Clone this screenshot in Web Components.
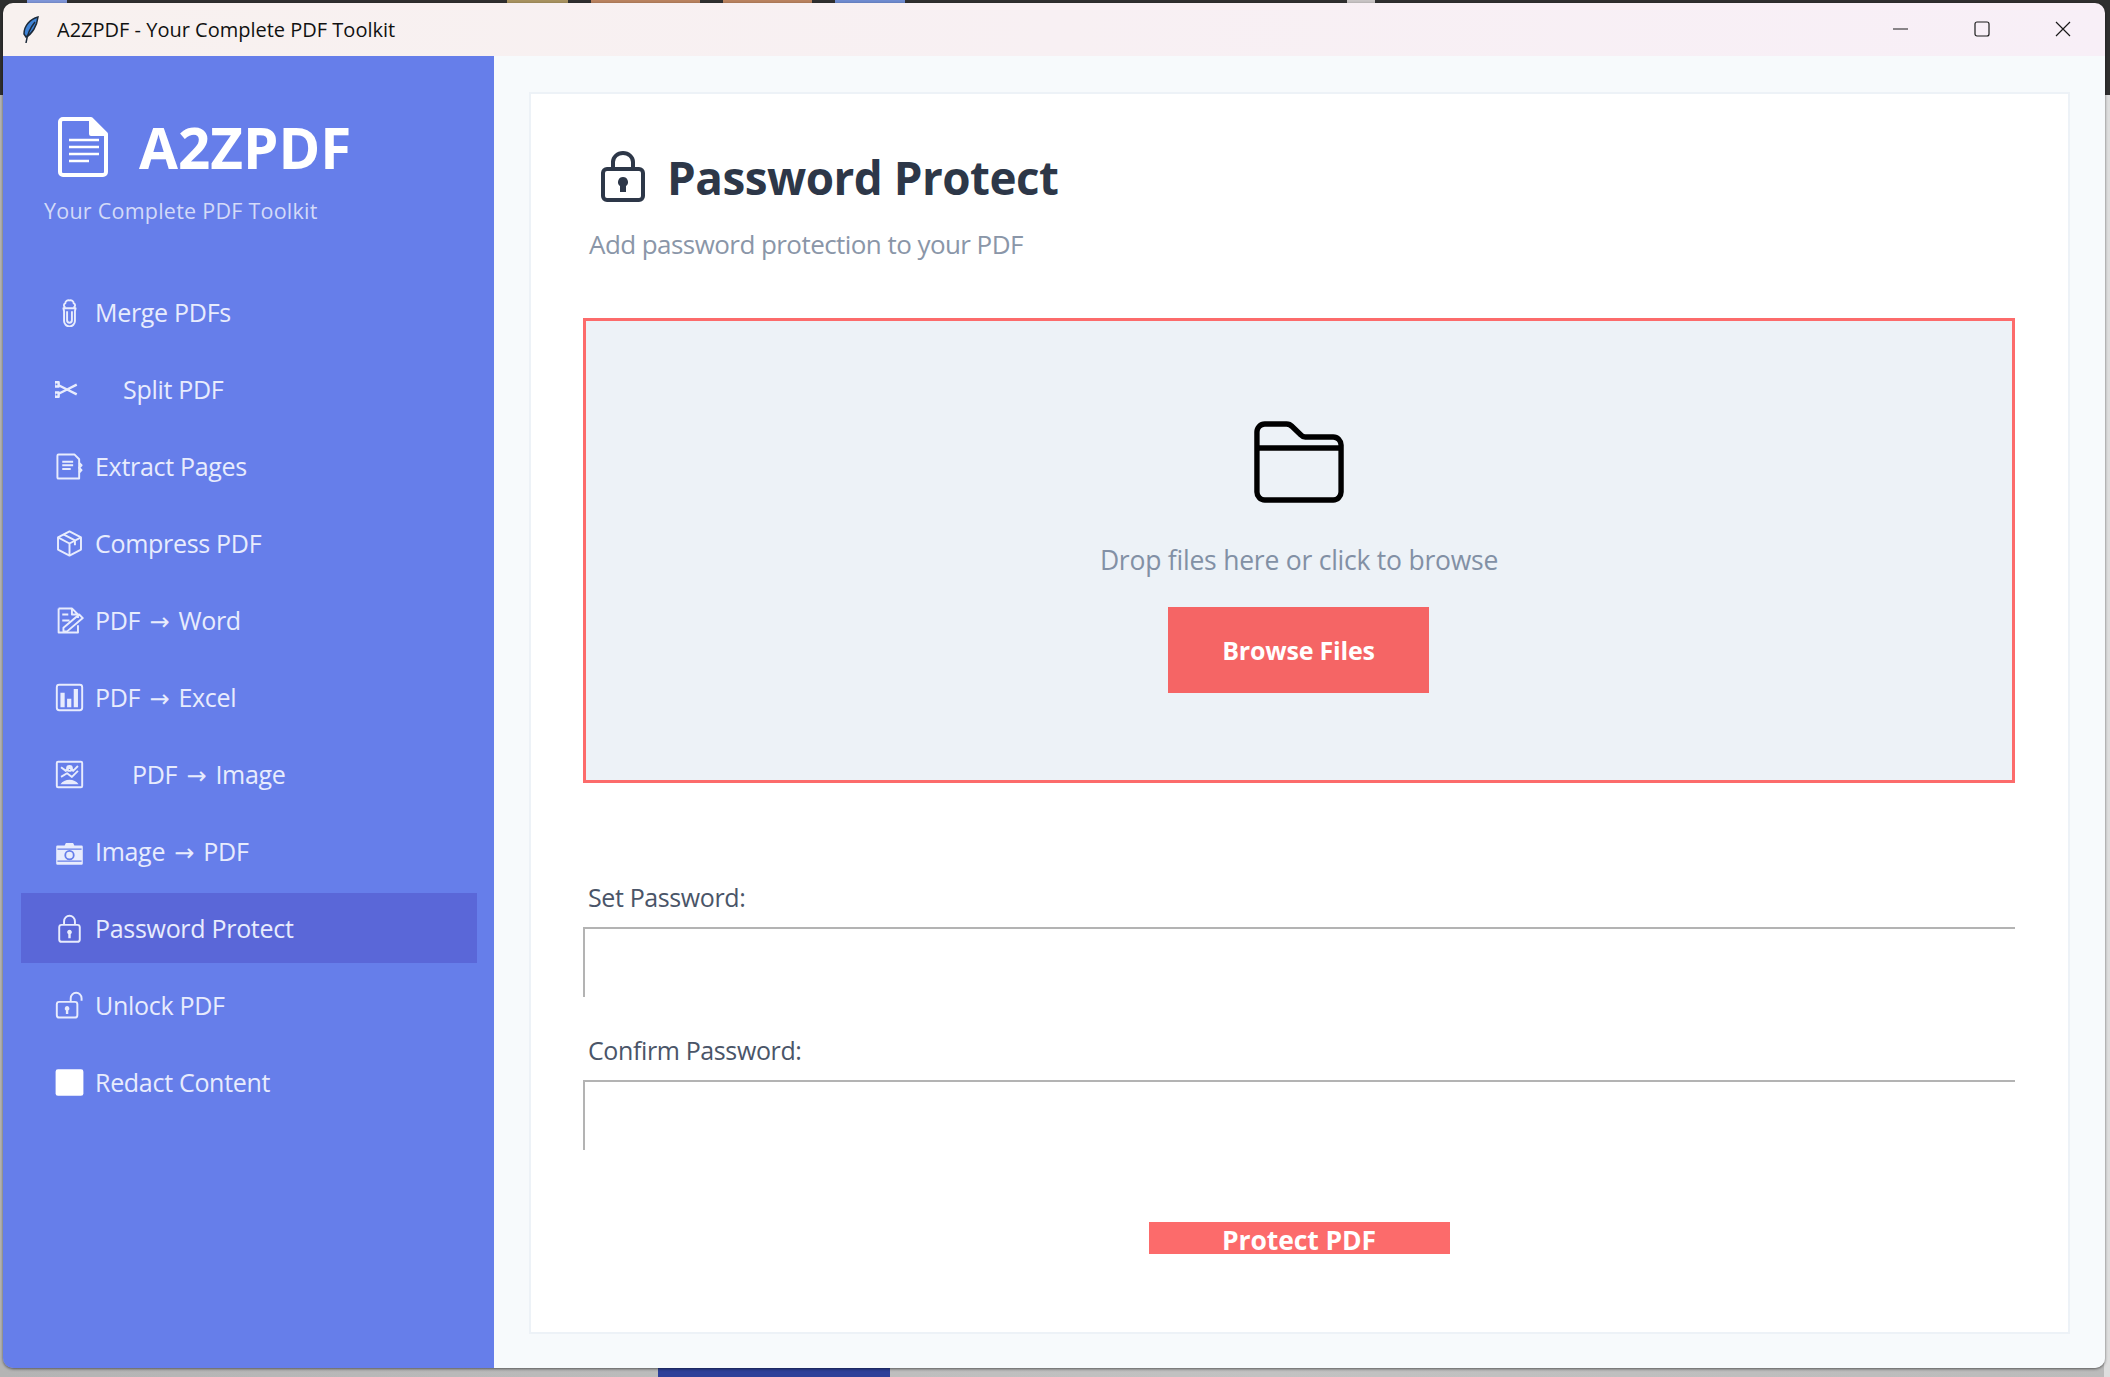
<!DOCTYPE html>
<html lang="en">
<head>
<meta charset="utf-8">
<title>A2ZPDF</title>
<style>
  html, body { margin: 0; height: 100%; overflow: hidden; }
  body { font-family: "Open Sans", "Liberation Sans", sans-serif; }
</style>
</head>
<body>
<desktop-backdrop>
  <app-window>
    <app-sidebar slot="side">
      <nav-item icon="merge">Merge PDFs</nav-item>
      <nav-item icon="split" wide="28">Split PDF</nav-item>
      <nav-item icon="extract">Extract Pages</nav-item>
      <nav-item icon="compress">Compress PDF</nav-item>
      <nav-item icon="word">PDF <span>→</span> Word</nav-item>
      <nav-item icon="excel">PDF <span>→</span> Excel</nav-item>
      <nav-item icon="image" wide="37">PDF <span>→</span> Image</nav-item>
      <nav-item icon="camera">Image <span>→</span> PDF</nav-item>
      <nav-item icon="lock" active>Password Protect</nav-item>
      <nav-item icon="unlock">Unlock PDF</nav-item>
      <nav-item icon="redact">Redact Content</nav-item>
    </app-sidebar>
    <protect-page slot="main"></protect-page>
  </app-window>
</desktop-backdrop>

<script>
/*
 * Icon paths, all drawn on a 24x24 box.
 */
const ICONS = {
  merge: '<path d="M8.500 8c-1.500-1-1.500-3 0-3.500 0-2 2-3 3.500-2.500 1.500-.5 3.500.5 3.500 2.500 1.500.5 1.500 2.500 0 3.500M7 8.500h10l-.5 2.500v8a4.500 4.500 0 0 1-9 0v-8z"/><path d="M10 11v7.500a2 2 0 0 0 4 0V11"/>',
  split: '<g transform="translate(-2.500 0)" stroke-width="2"><rect x="2" y="6" width="3.500" height="3.500"/><rect x="2" y="14.500" width="3.500" height="3.500"/><path d="M5.500 8.500l7 3.500 8-4M5.500 15.500l7-3.500 8 4"/></g>',
  extract: '<path d="M3 2h13l4 4v16H3a1 1 0 0 1-1-1V3a1 1 0 0 1 1-1z"/><path d="M6 8h9M6 11h9M6 14h7M20 9l2 2-2 2 2 2-2 2"/>',
  compress: '<path d="M12 2l9.500 5v10L12 22l-9.500-5V7z"/><path d="M2.500 7L12 12l9.500-5M12 12v10M7 4.500l9.500 5v4"/>',
  word: '<path d="M3 2h11l5 5v3M14 2v5h5M19 16v6H3V2"/><path d="M7 18l13-11 3 3-13 11H7zM6 12h6M6 7h5"/>',
  excel: '<rect x="1.500" y="1.500" width="21" height="21" rx="2"/><path fill="currentColor" stroke="none" d="M4.500 8h3.500v12H4.500zM10 13h3.500v7H10zM15.500 5H19v15h-3.500z"/>',
  image: '<rect x="1.500" y="1.500" width="21" height="21" rx="1"/><path d="M5 6l4 3 3-3 3 3 4-4M5 14l5-3 4 3 5-5"/><circle cx="12" cy="7" r="2"/><path fill="currentColor" stroke="none" d="M4.500 20c3-5 12-5 15 0z"/>',
  camera: '<path fill="currentColor" stroke="none" d="M2 7h6l1-2h6l1 2h6a1 1 0 0 1 1 1v14a1 1 0 0 1-1 1H2a1 1 0 0 1-1-1V8a1 1 0 0 1 1-1z"/><circle cx="12" cy="15" r="3.500" stroke="#667eea" stroke-width="1.500"/><path d="M2 10h20M2 20h20" stroke="#667eea" stroke-width="1"/>',
  lock: '<rect x="3.500" y="9" width="17" height="14" rx="2"/><path d="M7.500 9V6a4.500 4.500 0 0 1 9 0v3"/><path fill="currentColor" stroke="none" d="M12 13a2 2 0 0 1 1 3.700V20h-2v-3.300A2 2 0 0 1 12 13z"/>',
  unlock: '<rect x="1.500" y="9" width="17" height="13" rx="2"/><path d="M13 9V6a4.500 4.500 0 0 1 9 0v2"/><path fill="currentColor" stroke="none" d="M10 12.500a2 2 0 0 1 1 3.700V19H9v-2.800a2 2 0 0 1 1-3.700z"/>',
  redact: '<rect x="0.500" y="1" width="23" height="22" rx="2" fill="#fff" stroke="none"/>'
}

/*
 * Backdrop: the desktop seen around the edges of the window.
 */
const backdropTemplate = document.createElement('template')
backdropTemplate.innerHTML = `
  <style>
    :host {
      display: block;
      position: relative;
      width: 2110px;
      height: 1377px;
      overflow: hidden;
      background: linear-gradient(90deg, #b4b4b4, #c2c2c2 60%, #bbb);
    }
    .top { position: absolute; left: 0; right: 0; top: 0; height: 95px; background: #2f2f2f; }
    .right { position: absolute; right: 0; top: 95px; width: 6px; height: 1290px; background: #dedede; }
    .tab { position: absolute; top: 0; height: 3px; }
    .strip { position: absolute; left: 658px; bottom: 0; width: 232px; height: 9px; background: #2e4099; }
    ::slotted(app-window) { position: absolute; left: 3px; top: 3px; }
  </style>
  <div class="top"></div>
  <div class="right"></div>
  <div class="tab" style="left:27px;width:40px;background:#7f95d8"></div>
  <div class="tab" style="left:507px;width:61px;background:#a8925f"></div>
  <div class="tab" style="left:591px;width:109px;background:#b9825f"></div>
  <div class="tab" style="left:723px;width:89px;background:#b9825f"></div>
  <div class="tab" style="left:835px;width:70px;background:#6f8bd0"></div>
  <div class="tab" style="left:1347px;width:28px;background:#c8c4c4"></div>
  <div class="strip"></div>
  <slot></slot>
`
customElements.define('desktop-backdrop', class extends HTMLElement {
  constructor () {
    super()
    this.attachShadow({ mode: 'open' }).appendChild(backdropTemplate.content.cloneNode(true))
  }
})

/*
 * The window: title bar above, sidebar and main area below.
 */
const windowTemplate = document.createElement('template')
windowTemplate.innerHTML = `
  <style>
    :host {
      display: flex;
      flex-direction: column;
      width: 2102px;
      height: 1365px;
      border-radius: 10px;
      overflow: hidden;
      box-shadow: 0 1px 3px rgba(0, 0, 0, .55);
    }
    .bar {
      display: flex;
      align-items: center;
      flex: 0 0 53px;
      padding: 0 2px 0 17px;
      background: linear-gradient(90deg, #f8f1ef, #f8eff7);
      color: #111;
      font: 20px "Open Sans", sans-serif;
    }
    .bar svg.feather { width: 22px; height: 30px; margin-right: 15px; }
    .title { flex: 1; }
    .ctl { width: 81px; height: 51px; padding-bottom: 2px; display: flex; align-items: center; justify-content: center; }
    .ctl svg { width: 16px; height: 16px; fill: none; stroke: #1a1a1a; stroke-width: 1.200; }
    .body { flex: 1; display: flex; min-height: 0; }
  </style>
  <div class="bar">
    <svg class="feather" viewBox="0 0 22 30">
      <path fill="#3f83d6" stroke="#1c2a3a" stroke-width="1.500" d="M18 2c-8 2-14 9-14 17l2 3c6-3 11-11 12-20z"/>
      <path fill="none" stroke="#1c2a3a" stroke-width="1.500" d="M15 7C10 13 7 20 6 28"/>
    </svg>
    <span class="title">A2ZPDF - Your Complete PDF Toolkit</span>
    <span class="ctl"><svg viewBox="0 0 16 16"><path d="M0 8h15"/></svg></span>
    <span class="ctl"><svg viewBox="0 0 16 16"><rect x="1" y="1" width="14" height="14" rx="2"/></svg></span>
    <span class="ctl"><svg viewBox="0 0 16 16"><path d="M1 1l14 14M15 1L1 15"/></svg></span>
  </div>
  <div class="body">
    <slot name="side"></slot>
    <slot name="main"></slot>
  </div>
`
customElements.define('app-window', class extends HTMLElement {
  constructor () {
    super()
    this.attachShadow({ mode: 'open' }).appendChild(windowTemplate.content.cloneNode(true))
  }
})

/*
 * Sidebar with the logo block and the slotted nav items.
 */
const sidebarTemplate = document.createElement('template')
sidebarTemplate.innerHTML = `
  <style>
    :host {
      display: flex;
      flex-direction: column;
      flex: 0 0 491px;
      box-sizing: border-box;
      background: #667eea;
      padding: 0 17px 0 18px;
    }
    .logo {
      display: flex;
      align-items: center;
      gap: 30px;
      height: 78px;
      margin: 52px 0 0 36px;
      color: #fff;
      font: 700 56.500px "Open Sans", sans-serif;
    }
    .logo svg { width: 52px; height: 62px; }
    .tag {
      margin: 10px 0 0 23px;
      color: #d3daf8;
      font: 21.500px/30px "Open Sans", sans-serif;
      letter-spacing: .24px;
    }
    .list { display: flex; flex-direction: column; gap: 7px; margin-top: 51px; }
  </style>
  <div class="logo">
    <svg viewBox="0 0 52 62" fill="none" stroke="#fff" stroke-width="4" stroke-linejoin="round">
      <path d="M6 3h28l15 15v38a3 3 0 0 1-3 3H6a3 3 0 0 1-3-3V6a3 3 0 0 1 3-3z"/>
      <path d="M34 3v15h15" fill="#fff"/>
      <path stroke-width="2.500" d="M12 24h30M12 31h30M12 38h30M12 45h20"/>
    </svg>
    <span>A2ZPDF</span>
  </div>
  <div class="tag">Your Complete PDF Toolkit</div>
  <div class="list"><slot></slot></div>
`
customElements.define('app-sidebar', class extends HTMLElement {
  constructor () {
    super()
    this.attachShadow({ mode: 'open' }).appendChild(sidebarTemplate.content.cloneNode(true))
  }
})

/*
 * One sidebar row. Some rows have a wider gap after the icon, as in the app.
 */
const navTemplate = document.createElement('template')
navTemplate.innerHTML = `
  <style>
    :host {
      display: flex;
      align-items: center;
      height: 70px;
      padding-left: 34px;
      color: #e8ecfd;
      font: 25px "Open Sans", sans-serif;
      letter-spacing: -.3px;
    }
    :host([active]) { background: #5a67d8; }
    svg {
      flex: none;
      width: 29px;
      height: 29px;
      margin-right: 11px;
      fill: none;
      stroke: currentColor;
      stroke-width: 1.600;
      stroke-linejoin: round;
    }
    .text { white-space: pre; }
    ::slotted(span) { font-family: "DejaVu Sans", sans-serif; font-size: 24px; margin: 0 3px; }
  </style>
  <svg viewBox="0 0 24 24"></svg>
  <span class="text"><slot></slot></span>
`
customElements.define('nav-item', class extends HTMLElement {
  constructor () {
    super()
    this.attachShadow({ mode: 'open' }).appendChild(navTemplate.content.cloneNode(true))
  }

  /**
   * Called after the element is inserted into the DOM.
   */
  connectedCallback () {
    const svg = this.shadowRoot.querySelector('svg')
    svg.innerHTML = ICONS[this.getAttribute('icon')]
    if (this.hasAttribute('wide')) svg.style.marginRight = `${Number(this.getAttribute('wide')) + 11}px`
  }
})

/*
 * Drop area with folder icon and browse button.
 */
const dropTemplate = document.createElement('template')
dropTemplate.innerHTML = `
  <style>
    :host {
      display: flex;
      flex-direction: column;
      align-items: center;
      box-sizing: border-box;
      height: 465px;
      border: 3px solid #fc6b6b;
      background: #edf2f7;
      padding-top: 99px;
    }
    svg { width: 90px; height: 86px; margin-right: 1px; fill: none; stroke: #000; stroke-width: 5.500; stroke-linejoin: round; }
    p { margin: 34px 0 0; color: #8290a5; font: 26.500px/40px "Open Sans", sans-serif; letter-spacing: -.23px; }
    button {
      margin: 27px 1px 0 0;
      width: 261px;
      height: 86px;
      border: 0;
      background: #f56565;
      color: #fff;
      font: 700 25px "Open Sans", sans-serif;
      letter-spacing: -.2px;
    }
  </style>
  <svg viewBox="0 0 92 86" preserveAspectRatio="none">
    <path d="M3 12a8 8 0 0 1 8-8h22a8 8 0 0 1 6 2.500l9 8.500a6 6 0 0 0 5 2h28a8 8 0 0 1 8 8v47a8 8 0 0 1-8 8H11a8 8 0 0 1-8-8z"/>
    <path d="M3 28h86"/>
  </svg>
  <p>Drop files here or click to browse</p>
  <button type="button">Browse Files</button>
`
customElements.define('drop-zone', class extends HTMLElement {
  constructor () {
    super()
    this.attachShadow({ mode: 'open' }).appendChild(dropTemplate.content.cloneNode(true))
  }
})

/*
 * Label and borderless-looking input (only its top and left edge show).
 */
const fieldTemplate = document.createElement('template')
fieldTemplate.innerHTML = `
  <style>
    :host { display: block; }
    label { display: block; margin-left: 5px; color: #4a5568; font: 25px/40px "Open Sans", sans-serif; letter-spacing: -.38px; }
    .input { margin-top: 10px; height: 70px; border-top: 2px solid #b3b3b3; border-left: 2px solid #b3b3b3; box-sizing: border-box; }
  </style>
  <label><slot></slot></label>
  <div class="input"></div>
`
customElements.define('password-field', class extends HTMLElement {
  constructor () {
    super()
    this.attachShadow({ mode: 'open' }).appendChild(fieldTemplate.content.cloneNode(true))
  }
})

/*
 * The page inside the main area.
 */
const pageTemplate = document.createElement('template')
pageTemplate.innerHTML = `
  <style>
    :host {
      display: block;
      flex: 1;
      min-width: 0;
      box-sizing: border-box;
      height: 100%;
      padding: 36px 35px 34px 35px;
      background: #f7fafc;
    }
    .card {
      box-sizing: border-box;
      height: 100%;
      border: 2px solid #edf2f7;
      background: #fff;
      padding: 53px 53px 0 52px;
    }
    h1 {
      display: flex;
      align-items: center;
      gap: 21px;
      margin: 0 0 0 17px;
      height: 60px;
      color: #2d3748;
      font: 700 45.800px "Open Sans", sans-serif;
      letter-spacing: -.5px;
    }
    h1 svg { width: 46px; height: 52px; fill: none; stroke: #2d3748; stroke-width: 4; }
    .sub { margin: 17px 0 0 6px; color: #8a96a8; font: 26px/40px "Open Sans", sans-serif; letter-spacing: -.56px; }
    drop-zone { margin-top: 54px; }
    .first { margin-top: 94px; }
    .second { margin-top: 33px; }
    .action { display: flex; justify-content: center; margin-top: 72px; }
    .action button {
      width: 301px;
      height: 32px;
      padding: 3px 0 0;
      border: 0;
      background: #fc6b6b;
      color: #fff;
      font: 700 26.500px/28px "Open Sans", sans-serif;
      letter-spacing: -.1px;
    }
  </style>
  <div class="card">
    <h1>
      <svg viewBox="0 0 46 52">
        <rect x="3" y="18" width="40" height="31" rx="4"/>
        <path d="M13 18V11a10 9 0 0 1 20 0v7"/>
        <path fill="#2d3748" stroke="none" d="M23 26a5 5 0 0 1 3 9v6h-6v-6a5 5 0 0 1 3-9z"/>
      </svg>
      <span>Password Protect</span>
    </h1>
    <div class="sub">Add password protection to your PDF</div>
    <drop-zone></drop-zone>
    <password-field class="first">Set Password:</password-field>
    <password-field class="second">Confirm Password:</password-field>
    <div class="action"><button type="button">Protect PDF</button></div>
  </div>
`
customElements.define('protect-page', class extends HTMLElement {
  constructor () {
    super()
    this.attachShadow({ mode: 'open' }).appendChild(pageTemplate.content.cloneNode(true))
  }
})
</script>
</body>
</html>
